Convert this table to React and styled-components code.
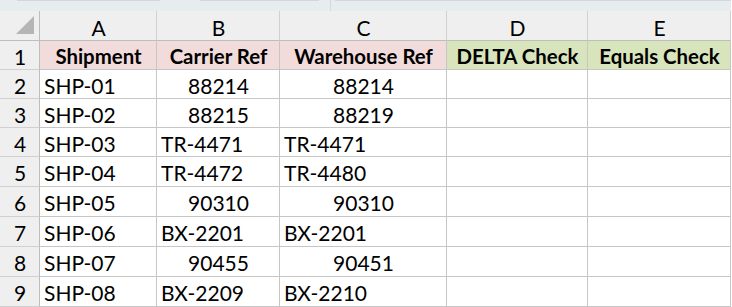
import React from "react";
import styled, { createGlobalStyle } from "styled-components";

const Global = createGlobalStyle`
  html, body { margin: 0; padding: 0; background: #ffffff; }
  body { font-family: Lato, "Liberation Sans", sans-serif; }
`;

const Page = styled.div`
  width: 732px;
  height: 307px;
  overflow: hidden;
  background: #ffffff;
`;

const TopStrip = styled.div`
  height: 11px;
  width: 731px;
  background: #e7ecef;
  display: flex;
  align-items: flex-start;
`;

const StripSeg = styled.div`
  height: 1px;
  margin-left: ${(p) => p.$gap}px;
  width: ${(p) => p.$w}px;
  background: #d3d8dc;
`;

const StripDivider = styled.div`
  width: 1px;
  height: 11px;
  margin-left: ${(p) => p.$gap}px;
  background: #d5dadd;
`;

const Sheet = styled.div`
  display: grid;
  grid-template-columns: 40px 117px 123px 167px 141px 143px;
  grid-template-rows: 30px repeat(4, 29px) repeat(5, 30px);
  font-size: 21px;
  color: #000;
`;

const Cell = styled.div`
  box-sizing: border-box;
  border-right: 1px solid #c6c6c6;
  border-bottom: 1px solid #c6c6c6;
  background: ${(p) => p.$bg || "#ffffff"};
  display: flex;
  align-items: center;
  justify-content: ${(p) => p.$align || "flex-start"};
  padding: 2px 3px 0 4px;
  white-space: nowrap;
  overflow: hidden;
  line-height: 1;
`;

const TitleCell = styled(Cell)`
  font-weight: 700;
  font-size: 20.4px;
  justify-content: center;
`;

const ColHead = styled(Cell)`
  background: #efefef;
  border-right-color: #d0d0d0;
  border-bottom-color: #bdbdbd;
  justify-content: center;
  padding-top: 3px;
`;

const RowHead = styled(Cell)`
  background: #efefef;
  border-right-color: #bdbdbd;
  border-bottom-color: #d0d0d0;
  justify-content: center;
`;

const Corner = styled.div`
  box-sizing: border-box;
  background: #efefef;
  border-right: 1px solid #bdbdbd;
  border-bottom: 1px solid #bdbdbd;
  position: relative;
`;

const Triangle = styled.svg`
  position: absolute;
  left: 16px;
  top: 5px;
`;

const cols = ["A", "B", "C", "D", "E"];
const headers = [
  { t: "Shipment", bg: "#f2dcdb" },
  { t: "Carrier Ref", bg: "#f2dcdb" },
  { t: "Warehouse Ref", bg: "#f2dcdb" },
  { t: "DELTA Check", bg: "#d8e4bc" },
  { t: "Equals Check", bg: "#d8e4bc" },
];

const rows = [
  ["SHP-01", "88214", "88214"],
  ["SHP-02", "88215", "88219"],
  ["SHP-03", "TR-4471", "TR-4471"],
  ["SHP-04", "TR-4472", "TR-4480"],
  ["SHP-05", "90310", "90310"],
  ["SHP-06", "BX-2201", "BX-2201"],
  ["SHP-07", "90455", "90451"],
  ["SHP-08", "BX-2209", "BX-2210"],
];

const isNum = (v) => /^\d+$/.test(v);

export default function App() {
  return (
    <Page>
      <Global />
      <TopStrip>
        <StripSeg $gap={17} $w={143} />
        <StripSeg $gap={40} $w={119} />
        <StripDivider $gap={11} />
        <StripSeg $gap={4} $w={396} />
      </TopStrip>
      <Sheet>
        <Corner>
          <Triangle width="19" height="19" viewBox="0 0 19 19">
            <polygon points="18,0 18,18 0,18" fill="#b5b5b5" />
          </Triangle>
        </Corner>
        {cols.map((c) => (
          <ColHead key={c}>{c}</ColHead>
        ))}
        <RowHead>1</RowHead>
        {headers.map((h) => (
          <TitleCell key={h.t} $bg={h.bg}>
            {h.t}
          </TitleCell>
        ))}
        {rows.map((r, i) => (
          <React.Fragment key={r[0]}>
            <RowHead>{i + 2}</RowHead>
            {r.map((v, j) => (
              <Cell key={j} $align={isNum(v) ? "center" : "flex-start"}>
                {v}
              </Cell>
            ))}
            <Cell />
            <Cell />
          </React.Fragment>
        ))}
      </Sheet>
    </Page>
  );
}
